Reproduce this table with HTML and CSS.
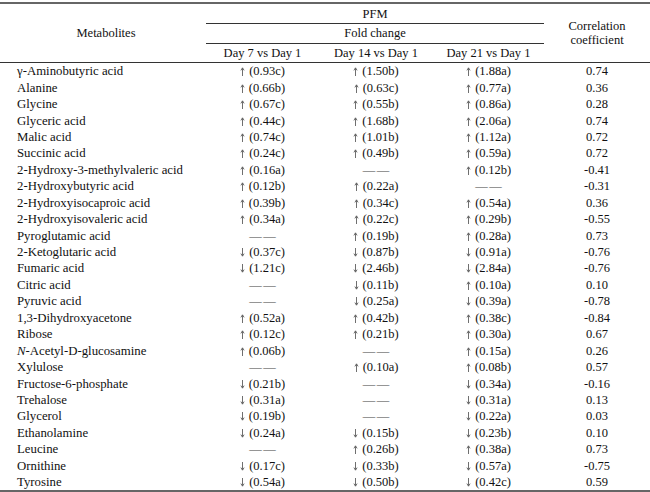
FILE: index.html
```html
<!DOCTYPE html>
<html>
<head>
<meta charset="utf-8">
<link rel="stylesheet" href="styles.css">
</head>
<body>
<svg class="defs" width="0" height="0" aria-hidden="true">
  <symbol id="up" viewBox="0 0 5 9">
    <path d="M2.5 1.2V9M0.9 3.4L2.5 0.8L4.1 3.4" fill="none" stroke="#555" stroke-width="0.85"/>
  </symbol>
  <symbol id="dn" viewBox="0 0 5 9">
    <path d="M2.5 0V7.8M0.9 5.6L2.5 8.2L4.1 5.6" fill="none" stroke="#555" stroke-width="0.85"/>
  </symbol>
</svg>
<table class="tbl">
  <colgroup>
    <col class="c-name"><col class="c-d7"><col class="c-d14"><col class="c-d21"><col class="c-corr">
  </colgroup>
  <thead>
    <tr class="h1">
      <th rowspan="3" class="hdr-name hdr-last">Metabolites</th>
      <th colspan="3" class="span-line">PFM</th>
      <th rowspan="3" class="hdr-last">Correlation<br>coefficient</th>
    </tr>
    <tr class="h2">
      <th colspan="3" class="span-line">Fold change</th>
    </tr>
    <tr class="h3">
      <th class="hdr-last">Day 7 vs Day 1</th>
      <th class="hdr-last">Day 14 vs Day 1</th>
      <th class="hdr-last">Day 21 vs Day 1</th>
    </tr>
  </thead>
  <tbody>
    <tr><td>γ-Aminobutyric acid</td><td><svg class="ar"><use href="#up"/></svg>(0.93c)</td><td><svg class="ar"><use href="#up"/></svg>(1.50b)</td><td><svg class="ar"><use href="#up"/></svg>(1.88a)</td><td>0.74</td></tr>
    <tr><td>Alanine</td><td><svg class="ar"><use href="#up"/></svg>(0.66b)</td><td><svg class="ar"><use href="#up"/></svg>(0.63c)</td><td><svg class="ar"><use href="#up"/></svg>(0.77a)</td><td>0.36</td></tr>
    <tr><td>Glycine</td><td><svg class="ar"><use href="#up"/></svg>(0.67c)</td><td><svg class="ar"><use href="#up"/></svg>(0.55b)</td><td><svg class="ar"><use href="#up"/></svg>(0.86a)</td><td>0.28</td></tr>
    <tr><td>Glyceric acid</td><td><svg class="ar"><use href="#up"/></svg>(0.44c)</td><td><svg class="ar"><use href="#up"/></svg>(1.68b)</td><td><svg class="ar"><use href="#up"/></svg>(2.06a)</td><td>0.74</td></tr>
    <tr><td>Malic acid</td><td><svg class="ar"><use href="#up"/></svg>(0.74c)</td><td><svg class="ar"><use href="#up"/></svg>(1.01b)</td><td><svg class="ar"><use href="#up"/></svg>(1.12a)</td><td>0.72</td></tr>
    <tr><td>Succinic acid</td><td><svg class="ar"><use href="#up"/></svg>(0.24c)</td><td><svg class="ar"><use href="#up"/></svg>(0.49b)</td><td><svg class="ar"><use href="#up"/></svg>(0.59a)</td><td>0.72</td></tr>
    <tr><td>2-Hydroxy-3-methylvaleric acid</td><td><svg class="ar"><use href="#up"/></svg>(0.16a)</td><td><span class="dash">——</span></td><td><svg class="ar"><use href="#up"/></svg>(0.12b)</td><td>-0.41</td></tr>
    <tr><td>2-Hydroxybutyric acid</td><td><svg class="ar"><use href="#up"/></svg>(0.12b)</td><td><svg class="ar"><use href="#up"/></svg>(0.22a)</td><td><span class="dash">——</span></td><td>-0.31</td></tr>
    <tr><td>2-Hydroxyisocaproic acid</td><td><svg class="ar"><use href="#up"/></svg>(0.39b)</td><td><svg class="ar"><use href="#up"/></svg>(0.34c)</td><td><svg class="ar"><use href="#up"/></svg>(0.54a)</td><td>0.36</td></tr>
    <tr><td>2-Hydroxyisovaleric acid</td><td><svg class="ar"><use href="#up"/></svg>(0.34a)</td><td><svg class="ar"><use href="#up"/></svg>(0.22c)</td><td><svg class="ar"><use href="#up"/></svg>(0.29b)</td><td>-0.55</td></tr>
    <tr><td>Pyroglutamic acid</td><td><span class="dash">——</span></td><td><svg class="ar"><use href="#up"/></svg>(0.19b)</td><td><svg class="ar"><use href="#up"/></svg>(0.28a)</td><td>0.73</td></tr>
    <tr><td>2-Ketoglutaric acid</td><td><svg class="ar"><use href="#dn"/></svg>(0.37c)</td><td><svg class="ar"><use href="#dn"/></svg>(0.87b)</td><td><svg class="ar"><use href="#dn"/></svg>(0.91a)</td><td>-0.76</td></tr>
    <tr><td>Fumaric acid</td><td><svg class="ar"><use href="#dn"/></svg>(1.21c)</td><td><svg class="ar"><use href="#dn"/></svg>(2.46b)</td><td><svg class="ar"><use href="#dn"/></svg>(2.84a)</td><td>-0.76</td></tr>
    <tr><td>Citric acid</td><td><span class="dash">——</span></td><td><svg class="ar"><use href="#dn"/></svg>(0.11b)</td><td><svg class="ar"><use href="#up"/></svg>(0.10a)</td><td>0.10</td></tr>
    <tr><td>Pyruvic acid</td><td><span class="dash">——</span></td><td><svg class="ar"><use href="#dn"/></svg>(0.25a)</td><td><svg class="ar"><use href="#dn"/></svg>(0.39a)</td><td>-0.78</td></tr>
    <tr><td>1,3-Dihydroxyacetone</td><td><svg class="ar"><use href="#up"/></svg>(0.52a)</td><td><svg class="ar"><use href="#up"/></svg>(0.42b)</td><td><svg class="ar"><use href="#up"/></svg>(0.38c)</td><td>-0.84</td></tr>
    <tr><td>Ribose</td><td><svg class="ar"><use href="#up"/></svg>(0.12c)</td><td><svg class="ar"><use href="#up"/></svg>(0.21b)</td><td><svg class="ar"><use href="#up"/></svg>(0.30a)</td><td>0.67</td></tr>
    <tr><td><i>N</i>-Acetyl-D-glucosamine</td><td><svg class="ar"><use href="#up"/></svg>(0.06b)</td><td><span class="dash">——</span></td><td><svg class="ar"><use href="#up"/></svg>(0.15a)</td><td>0.26</td></tr>
    <tr><td>Xylulose</td><td><span class="dash">——</span></td><td><svg class="ar"><use href="#up"/></svg>(0.10a)</td><td><svg class="ar"><use href="#up"/></svg>(0.08b)</td><td>0.57</td></tr>
    <tr><td>Fructose-6-phosphate</td><td><svg class="ar"><use href="#dn"/></svg>(0.21b)</td><td><span class="dash">——</span></td><td><svg class="ar"><use href="#dn"/></svg>(0.34a)</td><td>-0.16</td></tr>
    <tr><td>Trehalose</td><td><svg class="ar"><use href="#dn"/></svg>(0.31a)</td><td><span class="dash">——</span></td><td><svg class="ar"><use href="#dn"/></svg>(0.31a)</td><td>0.13</td></tr>
    <tr><td>Glycerol</td><td><svg class="ar"><use href="#dn"/></svg>(0.19b)</td><td><span class="dash">——</span></td><td><svg class="ar"><use href="#dn"/></svg>(0.22a)</td><td>0.03</td></tr>
    <tr><td>Ethanolamine</td><td><svg class="ar"><use href="#dn"/></svg>(0.24a)</td><td><svg class="ar"><use href="#dn"/></svg>(0.15b)</td><td><svg class="ar"><use href="#dn"/></svg>(0.23b)</td><td>0.10</td></tr>
    <tr><td>Leucine</td><td><span class="dash">——</span></td><td><svg class="ar"><use href="#up"/></svg>(0.26b)</td><td><svg class="ar"><use href="#up"/></svg>(0.38a)</td><td>0.73</td></tr>
    <tr><td>Ornithine</td><td><svg class="ar"><use href="#dn"/></svg>(0.17c)</td><td><svg class="ar"><use href="#dn"/></svg>(0.33b)</td><td><svg class="ar"><use href="#dn"/></svg>(0.57a)</td><td>-0.75</td></tr>
    <tr><td>Tyrosine</td><td><svg class="ar"><use href="#dn"/></svg>(0.54a)</td><td><svg class="ar"><use href="#dn"/></svg>(0.50b)</td><td><svg class="ar"><use href="#dn"/></svg>(0.42c)</td><td>0.59</td></tr>
  </tbody>
</table>
</body>
</html>
```
FILE: styles.css
```css
html, body {
  margin: 0;
  padding: 0;
  background: #fff;
}

.defs {
  position: absolute;
  width: 0;
  height: 0;
  overflow: hidden;
}

.tbl {
  width: 650px;
  table-layout: fixed;
  border-collapse: separate;
  border-spacing: 0;
  margin-top: 2px;
  font-family: "Liberation Serif", "Times New Roman", serif;
  font-size: 12.5px;
  color: #111;
  border-top: 2px solid #666;
  border-bottom: 2px solid #666;
}

.c-name { width: 206px; }
.c-d7 { width: 113px; }
.c-d14 { width: 114px; }
.c-d21 { width: 111px; }
.c-corr { width: 106px; }

th {
  font-weight: normal;
  text-align: center;
  padding: 0;
  line-height: 14px;
  vertical-align: middle;
}

.h1 { height: 20px; }
.h2 { height: 19.5px; }
.h3 { height: 19.5px; }

.span-line {
  border-bottom: 1px solid #333;
}

.hdr-last {
  border-bottom: 1px solid #333;
}

.hdr-name {
  padding-left: 6px;
}

td {
  padding: 0;
  height: 16.44px;
  line-height: 16px;
  text-align: center;
  white-space: nowrap;
}

td:first-child {
  text-align: left;
  padding-left: 17px;
  font-size: 12.8px;
}

.ar {
  width: 5px;
  height: 9px;
  margin-right: 4px;
  vertical-align: -1px;
}

.dash {
  color: #444;
  letter-spacing: 1.5px;
  margin-right: -1.5px;
}
```
